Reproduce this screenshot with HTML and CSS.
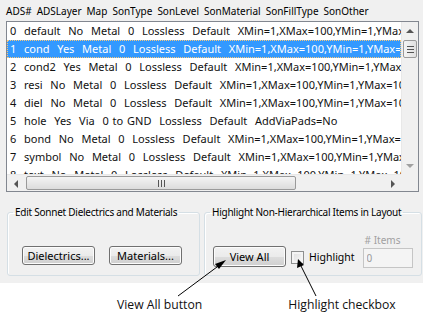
FILE: index.html
```html
<!DOCTYPE html>
<html lang="en">
<head>
  <meta charset="UTF-8">
  <title>Layer Map</title>
  <link rel="stylesheet" href="styles.css">
</head>
<body>
  <div class="dialog">
    <div class="cols">
      <span>ADS#</span><span>ADSLayer</span><span>Map</span><span>SonType</span><span>SonLevel</span><span>SonMaterial</span><span>SonFillType</span><span>SonOther</span>
    </div>

    <div class="listbox">
      <div class="rows">
        <div class="row">0  default  No  Metal  0  Lossless  Default  XMin=1,XMax=100,YMin=1,YMax=100</div>
        <div class="row selected"><span class="focus">1  cond  Yes  Metal  0  Lossless  Default  XMin=1,XMax=100,YMin=1,YMax=100</span></div>
        <div class="row">2  cond2  Yes  Metal  0  Lossless  Default  XMin=1,XMax=100,YMin=1,YMax=100</div>
        <div class="row">3  resi  No  Metal  0  Lossless  Default  XMin=1,XMax=100,YMin=1,YMax=100</div>
        <div class="row">4  diel  No  Metal  0  Lossless  Default  XMin=1,XMax=100,YMin=1,YMax=100</div>
        <div class="row">5  hole  Yes  Via  0 to GND  Lossless  Default  AddViaPads=No</div>
        <div class="row">6  bond  No  Metal  0  Lossless  Default  XMin=1,XMax=100,YMin=1,YMax=100</div>
        <div class="row">7  symbol  No  Metal  0  Lossless  Default  XMin=1,XMax=100,YMin=1,YMax=100</div>
        <div class="row">8  text  No  Metal  0  Lossless  Default  XMin=1,XMax=100,YMin=1,YMax=100</div>
      </div>
      <div class="vscroll">
        <div class="arrow up"></div>
        <div class="vthumb"><i></i><i></i><i></i></div>
        <div class="vtrack"></div>
        <div class="arrow down"></div>
      </div>
      <div class="hscroll">
        <div class="arrow left"></div>
        <div class="hthumb"><i></i><i></i><i></i></div>
        <div class="htrack"></div>
        <div class="arrow right"></div>
      </div>
      <div class="corner"></div>
    </div>

    <div class="groups">
      <fieldset class="group left-group">
        <legend>Edit Sonnet Dielectrics and Materials</legend>
        <div class="group-body">
          <button class="btn">Dielectrics...</button>
          <button class="btn">Materials...</button>
        </div>
      </fieldset>
      <fieldset class="group right-group">
        <legend>Highlight Non-Hierarchical Items in Layout</legend>
        <div class="group-body">
          <button class="btn view-all">View All</button>
          <label class="check"><span class="box"></span>Highlight</label>
          <div class="items">
            <span class="items-label"># Items</span>
            <input class="count" type="text" value="0" disabled>
          </div>
        </div>
      </fieldset>
    </div>
  </div>

  <div class="notes">
    <span class="note note-view">View All button</span>
    <span class="note note-check">Highlight checkbox</span>
  </div>

  <svg class="arrows" width="423" height="320" viewBox="0 0 423 320">
    <line x1="178" y1="296" x2="221" y2="264" stroke="#000" stroke-width="1"/>
    <polygon points="226,260 215,264 219,269" fill="#000"/>
    <line x1="316" y1="296" x2="301" y2="266" stroke="#000" stroke-width="1"/>
    <polygon points="298,259 297,268 304,265" fill="#000"/>
  </svg>
</body>
</html>
```

FILE: styles.css
```css
body {
  margin: 0;
  background: #fff;
  font-family: "Noto Sans", sans-serif;
  font-size: 10px;
  color: #000;
  position: relative;
  width: 423px;
  height: 320px;
  overflow: hidden;
}

.dialog {
  background: #f0f0f0;
  height: 283px;
  padding-top: 1px;
  box-sizing: border-box;
}

.cols {
  display: flex;
  gap: 5px;
  padding-left: 6px;
  height: 20px;
  line-height: 20px;
  color: #000;
}

.listbox {
  margin-left: 6px;
  width: 413px;
  height: 171px;
  box-sizing: border-box;
  border: 1px solid #828790;
  background: #fff;
  display: grid;
  grid-template-columns: 1fr 17px;
  grid-template-rows: 1fr 17px;
}

.rows {
  overflow: hidden;
  min-width: 0;
}

.row {
  height: 18px;
  line-height: 18px;
  padding-left: 3px;
  white-space: pre;
  font-size: 11px;
  word-spacing: 1px;
  color: #111;
}

.row.selected {
  background: #3399ff;
  color: #fff;
}

.focus {
  display: block;
  height: 16px;
  line-height: 16px;
  margin-left: -3px;
  padding-left: 2px;
  border: 1px dotted #f7c77a;
  overflow: hidden;
}

.vscroll {
  display: flex;
  flex-direction: column;
  background: #f0f0f0;
  border-left: 1px solid #e8e8e8;
}

.vtrack,
.htrack {
  flex: 1;
}

.arrow {
  position: relative;
  flex: 0 0 17px;
  height: 17px;
}

.arrow::after {
  content: "";
  position: absolute;
  left: 50%;
  top: 50%;
  width: 0;
  height: 0;
  border: 4px solid transparent;
  transform: translate(-50%, -50%);
}

.arrow.up::after {
  border-bottom: 4px solid #555;
  border-top-width: 0;
}

.arrow.down::after {
  border-top: 4px solid #a0a0a0;
  border-bottom-width: 0;
}

.arrow.left::after {
  border-right: 4px solid #555;
  border-left-width: 0;
}

.arrow.right::after {
  border-left: 4px solid #555;
  border-right-width: 0;
}

.vthumb {
  height: 18px;
  margin: 1px 1px 0 1px;
  border: 1px solid #9a9a9a;
  border-radius: 2px;
  background: linear-gradient(to right, #f4f4f4, #e0e0e0);
  display: flex;
  flex-direction: column;
  align-items: center;
  justify-content: center;
  gap: 2px;
  box-sizing: border-box;
}

.vthumb i {
  display: block;
  width: 7px;
  height: 1px;
  background: #555;
}

.hscroll {
  display: flex;
  background: #f0f0f0;
  border-top: 1px solid #e8e8e8;
}

.hthumb {
  width: 270px;
  margin: 1px 0 1px 2px;
  border: 1px solid #9a9a9a;
  border-radius: 2px;
  background: linear-gradient(to bottom, #f4f4f4, #dcdcdc);
  display: flex;
  align-items: center;
  justify-content: center;
  gap: 2px;
  box-sizing: border-box;
}

.hthumb i {
  display: block;
  width: 1px;
  height: 7px;
  background: #555;
}

.corner {
  background: #f0f0f0;
}

.groups {
  display: flex;
  gap: 4px;
  margin: 14px 0 0 7px;
}

.group {
  margin: 0;
  padding: 0;
  min-width: 0;
  border: 1px solid #d5dfe5;
  border-radius: 3px;
  box-shadow: inset 1px 1px 0 #fff;
}

.group legend {
  padding: 0 2px;
  margin-left: 5px;
  white-space: nowrap;
  line-height: 13px;
  letter-spacing: -0.25px;
  color: #000;
}

.group-body {
  display: flex;
  align-items: flex-end;
  height: 56px;
  box-sizing: border-box;
}

.left-group {
  width: 191px;
}

.left-group .group-body {
  gap: 14px;
  padding: 0 0 10px 14px;
}

.right-group {
  width: 216px;
}

.right-group .group-body {
  padding: 0 0 7px 8px;
}

.btn {
  font: inherit;
  font-size: 11px;
  color: #000;
  height: 19px;
  padding: 0;
  border: 1px solid #707070;
  border-radius: 3px;
  background: linear-gradient(to bottom, #f2f2f2 0%, #ebebeb 50%, #dddddd 51%, #cfcfcf 100%);
  box-shadow: inset 0 0 0 1px #fcfcfc;
}

.left-group .btn {
  width: 73px;
}

.view-all {
  width: 73px;
  height: 21px;
  margin-bottom: 1px;
}

.check {
  display: flex;
  align-items: center;
  gap: 5px;
  margin-left: 5px;
  height: 22px;
  font-size: 10.5px;
}

.box {
  width: 13px;
  height: 13px;
  box-sizing: border-box;
  border: 1px solid #8e8f8f;
  background: linear-gradient(135deg, #dcdcdc, #fbfbfb);
  box-shadow: inset 0 0 0 2px #f4f4f4;
}

.items {
  display: flex;
  flex-direction: column;
  margin-left: 8px;
}

.items-label {
  color: #a0a0a0;
  padding-left: 2px;
  height: 15px;
}

.count {
  font: inherit;
  width: 50px;
  height: 20px;
  box-sizing: border-box;
  border: 1px solid #c5c5c5;
  background: #f4f4f4;
  color: #9a9a9a;
  padding: 0 3px;
}

.notes {
  display: flex;
  padding: 13px 0 0 117px;
  font-family: "Open Sans", sans-serif;
  font-size: 12.2px;
  color: #111;
}

.note-check {
  margin-left: 86px;
}

.arrows {
  position: absolute;
  left: 0;
  top: 0;
  pointer-events: none;
}
```
